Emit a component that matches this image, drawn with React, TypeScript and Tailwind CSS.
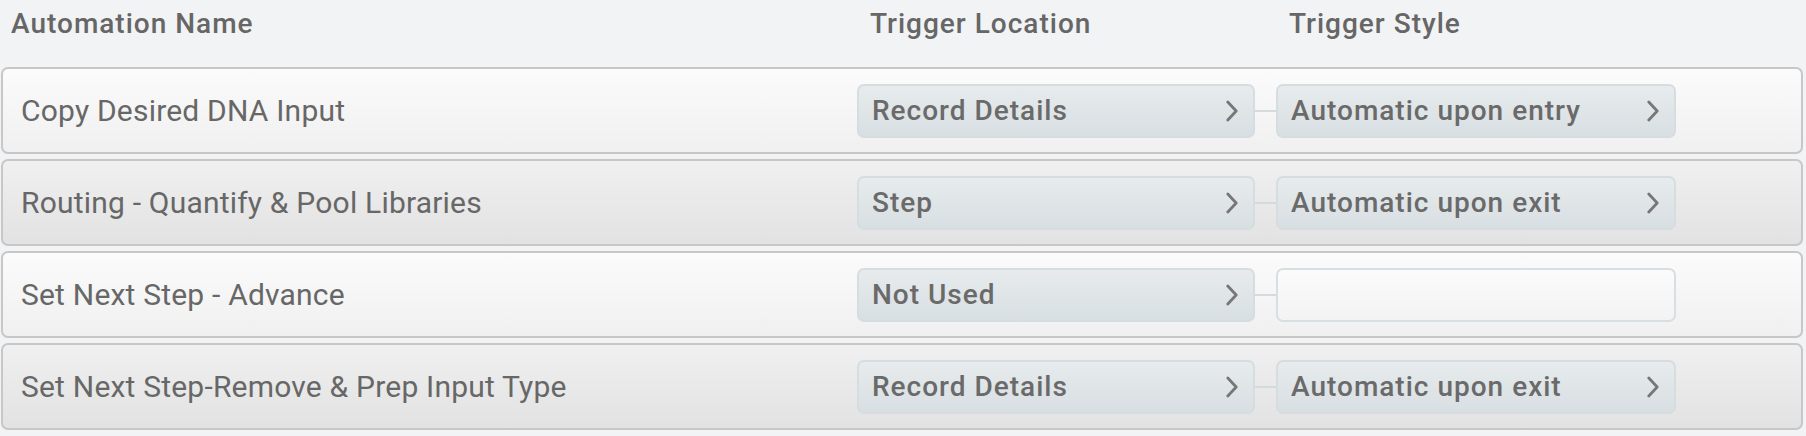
import React from "react";

type Row = { name: string; location: string; style: string | null; dark: boolean };

const rows: Row[] = [
  { name: "Copy Desired DNA Input", location: "Record Details", style: "Automatic upon entry", dark: false },
  { name: "Routing - Quantify & Pool Libraries", location: "Step", style: "Automatic upon exit", dark: true },
  { name: "Set Next Step - Advance", location: "Not Used", style: null, dark: false },
  { name: "Set Next Step-Remove & Prep Input Type", location: "Record Details", style: "Automatic upon exit", dark: true },
];

function Chevron() {
  return (
    <svg width="12" height="22" viewBox="0 0 12 22" fill="none">
      <polyline points="1.8,2 10.2,11 1.8,20" stroke="#777777" strokeWidth="2.8" strokeLinecap="round" strokeLinejoin="round" />
    </svg>
  );
}

function Pill({ label, width }: { label: string; width: string }) {
  return (
    <div
      className={`${width} h-[54px] shrink-0 flex items-center justify-between pl-[13px] pr-[15px] rounded-[7px] border-2 border-[#d6dde0] bg-linear-to-b from-[#e7ebed] to-[#d8dfe2]`}
    >
      <span className="text-[28px] tracking-[1px] font-medium text-[#6a6a6a] leading-none">{label}</span>
      <Chevron />
    </div>
  );
}

export default function App() {
  return (
    <div
      className="w-[1806px] h-[436px] bg-[#f2f3f5] overflow-hidden"
      style={{ fontFamily: "Roboto, 'Liberation Sans', sans-serif" }}
    >
      <div className="h-[67px] flex pt-[10px] text-[28px] tracking-[1px] leading-[28px] font-medium text-[#666666]">
        <div className="w-[857px] shrink-0 pl-[11px]">Automation Name</div>
        <div className="w-[419px] shrink-0 pl-[13px]">Trigger Location</div>
        <div className="pl-[13px]">Trigger Style</div>
      </div>
      <div className="flex flex-col gap-[5px] ml-[1px] w-[1802px]">
        {rows.map((r, i) => (
          <div
            key={i}
            className={`h-[87px] flex items-center rounded-[7px] border-2 border-[#c7c7c7] bg-linear-to-b ${
              r.dark ? "from-[#f0f0f0] to-[#e2e2e2]" : "from-[#fbfbfb] to-[#f0f0f0]"
            }`}
          >
            <div className="w-[854px] shrink-0 pl-[18px] text-[30px] tracking-[0.2px] text-[#676767] leading-none">
              {r.name}
            </div>
            <Pill label={r.location} width="w-[398px]" />
            <div className="w-[21px] h-[2px] bg-[#d3dbde] shrink-0" />
            {r.style ? (
              <Pill label={r.style} width="w-[400px]" />
            ) : (
              <div className="w-[400px] h-[54px] shrink-0 rounded-[7px] border-2 border-[#d8dfe2] bg-linear-to-b from-[#fbfbfb] to-[#f3f3f3]" />
            )}
          </div>
        ))}
      </div>
    </div>
  );
}
